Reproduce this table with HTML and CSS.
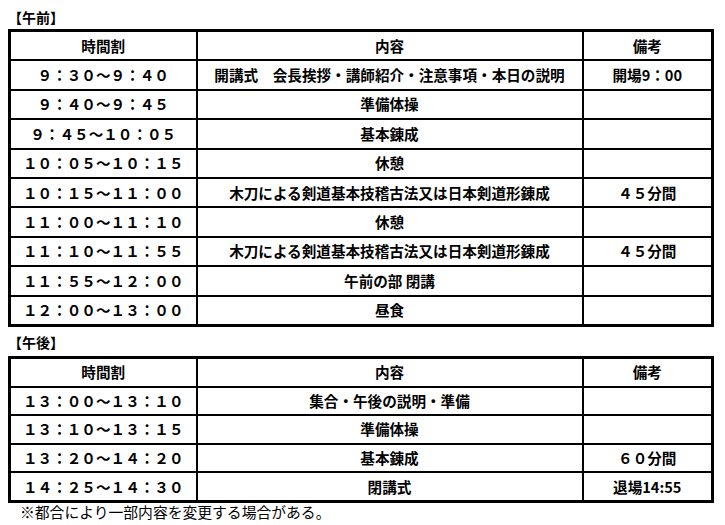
FILE: index.html
```html
<!DOCTYPE html>
<html lang="ja">
<head>
<meta charset="utf-8">
<link rel="stylesheet" href="styles.css">
</head>
<body>
<div class="page">
  <div class="label">【午前】</div>
  <table class="sched">
    <colgroup><col class="c1"><col class="c2"><col class="c3"></colgroup>
    <tr><td>時間割</td><td>内容</td><td>備考</td></tr>
    <tr><td class="time">９：３０～９：４０</td><td>開講式　会長挨拶・講師紹介・注意事項・本日の説明</td><td>開場9：00</td></tr>
    <tr><td class="time">９：４０～９：４５</td><td>準備体操</td><td></td></tr>
    <tr><td class="time">９：４５～１０：０５</td><td>基本錬成</td><td></td></tr>
    <tr><td class="time">１０：０５～１０：１５</td><td>休憩</td><td></td></tr>
    <tr><td class="time">１０：１５～１１：００</td><td>木刀による剣道基本技稽古法又は日本剣道形錬成</td><td>４５分間</td></tr>
    <tr><td class="time">１１：００～１１：１０</td><td>休憩</td><td></td></tr>
    <tr><td class="time">１１：１０～１１：５５</td><td>木刀による剣道基本技稽古法又は日本剣道形錬成</td><td>４５分間</td></tr>
    <tr><td class="time">１１：５５～１２：００</td><td>午前の部 閉講</td><td></td></tr>
    <tr><td class="time">１２：００～１３：００</td><td>昼食</td><td></td></tr>
  </table>
  <div class="label label2">【午後】</div>
  <table class="sched sched2">
    <colgroup><col class="c1"><col class="c2"><col class="c3"></colgroup>
    <tr><td>時間割</td><td>内容</td><td>備考</td></tr>
    <tr><td class="time">１３：００～１３：１０</td><td>集合・午後の説明・準備</td><td></td></tr>
    <tr><td class="time">１３：１０～１３：１５</td><td>準備体操</td><td></td></tr>
    <tr><td class="time">１３：２０～１４：２０</td><td>基本錬成</td><td>６０分間</td></tr>
    <tr><td class="time">１４：２５～１４：３０</td><td>閉講式</td><td>退場14:55</td></tr>
  </table>
  <div class="note">※都合により一部内容を変更する場合がある。</div>
</div>
</body>
</html>
```

FILE: styles.css
```css
html, body {
  margin: 0;
  padding: 0;
  background: #ffffff;
}
.page {
  padding: 5px 0 0 8px;
  width: 703px;
  font-family: "Noto Sans CJK JP", "Noto Sans", sans-serif;
  color: #000;
}
.label {
  font-size: 14px;
  font-weight: 700;
  line-height: 24px;
  height: 24px;
}
.label2 {
  height: 29px;
  line-height: 31px;
}
.sched {
  border-collapse: collapse;
  width: 703px;
  table-layout: fixed;
  border: 3px solid #000;
}
.c1 { width: 187px; }
.c2 { width: 386px; }
.c3 { width: 130px; }
.sched td {
  border: 2px solid #000;
  height: 27.4px;
  padding: 0;
  text-align: center;
  vertical-align: middle;
  font-size: 14.6px;
  font-weight: 700;
  line-height: 18px;
  white-space: nowrap;
}
.sched2 td {
  height: 26.6px;
}
.note {
  font-size: 14.8px;
  line-height: 18px;
  margin-left: 12px;
  font-weight: 400;
}
```
